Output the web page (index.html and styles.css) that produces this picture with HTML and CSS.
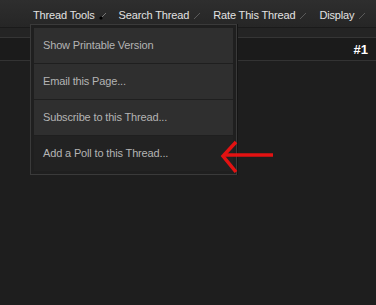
FILE: index.html
```html
<!DOCTYPE html>
<html lang="en">
<head>
  <meta charset="UTF-8">
  <title>Thread Tools</title>
  <link rel="stylesheet" href="styles.css">
</head>
<body>
  <div class="toolbar">
    <div class="tool active">
      <span>Thread Tools</span>
      <svg class="caret" viewBox="0 0 8 8"><path d="M7 1L2 6"/><circle cx="2" cy="6" r="1.6"/></svg>
    </div>
    <div class="tool">
      <span>Search Thread</span>
      <svg class="caret" viewBox="0 0 8 8"><path d="M7 1L1 7"/></svg>
    </div>
    <div class="tool">
      <span>Rate This Thread</span>
      <svg class="caret" viewBox="0 0 8 8"><path d="M7 1L1 7"/></svg>
    </div>
    <div class="tool">
      <span>Display</span>
      <svg class="caret" viewBox="0 0 8 8"><path d="M7 1L1 7"/></svg>
    </div>
  </div>

  <div class="strip"></div>
  <div class="post-head">
    <span class="post-num">#1</span>
  </div>
  <div class="post-body"></div>

  <!-- dropdown opened under Thread Tools -->
  <ul class="menu">
    <li>Show Printable Version</li>
    <li>Email this Page...</li>
    <li>Subscribe to this Thread...</li>
    <li class="plain">Add a Poll to this Thread...</li>
  </ul>

  <svg class="pointer" viewBox="0 0 56 36">
    <path d="M53 15H5"/>
    <path d="M16 2L3 16L16 32"/>
  </svg>
</body>
</html>
```

FILE: styles.css
```css
body {
  margin: 0;
  background-color: #1e1e1e;
  font-family: "Liberation Sans", Arial, sans-serif;
  font-size: 11px;
  letter-spacing: -0.15px;
  height: 305px;
  overflow: hidden;
  position: relative;
}

.toolbar {
  height: 24px;
  display: flex;
  align-items: center;
  padding: 3px 0 0 33px;
  background: linear-gradient(to bottom, #2e2e2e, #262626);
  border-bottom: 1px solid #1a1a1a;
  white-space: nowrap;
}

.tool {
  display: flex;
  align-items: center;
  flex-shrink: 0;
  color: #e2e2e2;
  margin-right: 12px;
}

.caret {
  width: 8px;
  height: 8px;
  margin-left: 4px;
  margin-top: 2px;
  stroke: #5a5a5a;
  stroke-width: 1;
  fill: none;
}

.tool.active .caret {
  stroke: #777;
}

.tool.active .caret circle {
  fill: #000;
  stroke: none;
}

.strip {
  height: 9px;
  background-color: #242424;
  border-bottom: 1px solid #353535;
}

.post-head {
  height: 22px;
  display: flex;
  align-items: center;
  justify-content: flex-end;
  padding-right: 8px;
  background-color: #1b1b1b;
  border-bottom: 1px solid #333;
}

.post-num {
  color: #fff;
  font-size: 13px;
  font-weight: bold;
  letter-spacing: 0;
}

.menu {
  position: absolute;
  top: 24px;
  left: 30px;
  width: 199px;
  margin: 0;
  padding: 3px;
  list-style: none;
  background-color: #1f1f1f;
  border: 1px solid #3a3a3a;
  box-shadow: 1px 0 0 #151515;
}

.menu li {
  height: 35px;
  line-height: 35px;
  padding-left: 9px;
  color: #b4b4b4;
  background-color: #2f2f2f;
  border-bottom: 1px solid #1f1f1f;
}

.menu li.plain {
  background-color: #222;
  border-bottom: none;
}

.pointer {
  position: absolute;
  left: 220px;
  top: 140px;
  width: 56px;
  height: 36px;
  fill: none;
  stroke: #e31212;
  stroke-width: 3.5;
}
```
